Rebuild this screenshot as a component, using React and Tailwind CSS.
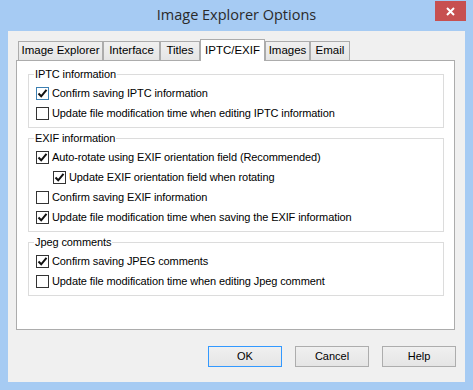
import React from "react";

const Check = ({ checked, blue }) => (
  <span
    className={`flex h-[13px] w-[13px] shrink-0 items-center justify-center border bg-white ${
      blue ? "border-[#3c7fb1]" : "border-[#333333]"
    }`}
  >
    {checked && (
      <svg width="11" height="11" viewBox="0 0 11 11">
        <path d="M1.5 5.5 L4.2 8.3 L9.5 1.8" fill="none" stroke="#111" strokeWidth="2" />
      </svg>
    )}
  </span>
);

const Row = ({ checked, label, indent, blue }) => (
  <div className={`flex h-[20px] items-center gap-[3px] ${indent ? "pl-[17px]" : ""}`}>
    <Check checked={checked} blue={blue} />
    <span className="text-[11px] leading-[14px] tracking-[-0.1px] text-black">{label}</span>
  </div>
);

const Group = ({ title, children }) => (
  <fieldset className="border border-[#dcdcdc] pl-[7px] pr-2 pb-[4px] pt-[2px]">
    <legend className="-ml-[2px] px-[1px] text-[11px] leading-[14px] tracking-[-0.1px] text-black">{title}</legend>
    {children}
  </fieldset>
);

const tabs = [
  { name: "Image Explorer", w: "w-[85px]" },
  { name: "Interface", w: "w-[57px]" },
  { name: "Titles", w: "w-[40px]" },
  { name: "IPTC/EXIF", w: "w-[65px]", active: true },
  { name: "Images", w: "w-[45px]" },
  { name: "Email", w: "w-[40px]" },
];

const Btn = ({ label, def }) => (
  <button
    className={`h-[21px] w-[74px] border bg-gradient-to-b from-[#f0f0f0] to-[#e5e5e5] text-[11px] text-black ${
      def ? "border-[#3399ff]" : "border-[#adadad]"
    }`}
  >
    {label}
  </button>
);

export default function App() {
  return (
    <div
      className="flex h-[390px] w-[473px] flex-col bg-[#a6cbf3]"
      style={{ fontFamily: "'Liberation Sans', Arial, sans-serif" }}
    >
      {/* Title bar */}
      <div className="flex h-[31px] shrink-0 items-start">
        <div
          className="flex-1 pl-[38px] pt-[5px] text-center text-[14.5px] leading-[20px] text-[#2a2a2a]"
          style={{ fontFamily: "'Open Sans', sans-serif" }}
        >
          Image Explorer Options
        </div>
        <div className="mr-[7px] mt-[1px] flex h-[20px] w-[31px] items-center justify-center bg-[#c75050]">
          <svg width="9" height="9" viewBox="0 0 9 9">
            <path d="M1 1 L8 8 M8 1 L1 8" stroke="#fff" strokeWidth="2" />
          </svg>
        </div>
      </div>

      {/* Client */}
      <div className="mx-[8px] mb-[8px] flex flex-1 flex-col bg-[#f0f0f0] pl-[8px] pr-[10px] pt-[8px]">
        {/* Tabs */}
        <div className="flex h-[21px] items-end pl-[2px]">
          {tabs.map((t) =>
            t.active ? (
              <div
                key={t.name}
                className={`${t.w} relative z-10 -mb-[1px] flex h-[22px] items-center justify-center border border-b-0 border-[#acacac] bg-white text-[11.5px] text-black`}
              >
                {t.name}
              </div>
            ) : (
              <div
                key={t.name}
                className={`${t.w} flex h-[19px] items-center justify-center border border-b-0 border-[#acacac] bg-gradient-to-b from-[#f0f0f0] to-[#e5e5e5] text-[11.5px] text-black`}
              >
                {t.name}
              </div>
            )
          )}
        </div>

        {/* Panel */}
        <div className="flex h-[270px] flex-col gap-[3px] border border-[#acacac] bg-white pl-[11px] pr-[10px] pt-[6px]">
          <Group title="IPTC information">
            <Row checked blue label="Confirm saving IPTC information" />
            <Row label="Update file modification time when editing IPTC information" />
          </Group>
          <Group title="EXIF information">
            <Row checked label="Auto-rotate using EXIF orientation field (Recommended)" />
            <Row checked indent label="Update EXIF orientation field when rotating" />
            <Row label="Confirm saving EXIF information" />
            <Row checked label="Update file modification time when saving the EXIF information" />
          </Group>
          <Group title="Jpeg comments">
            <Row checked label="Confirm saving JPEG comments" />
            <Row label="Update file modification time when editing Jpeg comment" />
          </Group>
        </div>

        {/* Buttons */}
        <div className="-mr-[1px] flex justify-end gap-[13px] pt-[16px]">
          <Btn label="OK" def />
          <Btn label="Cancel" />
          <Btn label="Help" />
        </div>
      </div>
    </div>
  );
}
